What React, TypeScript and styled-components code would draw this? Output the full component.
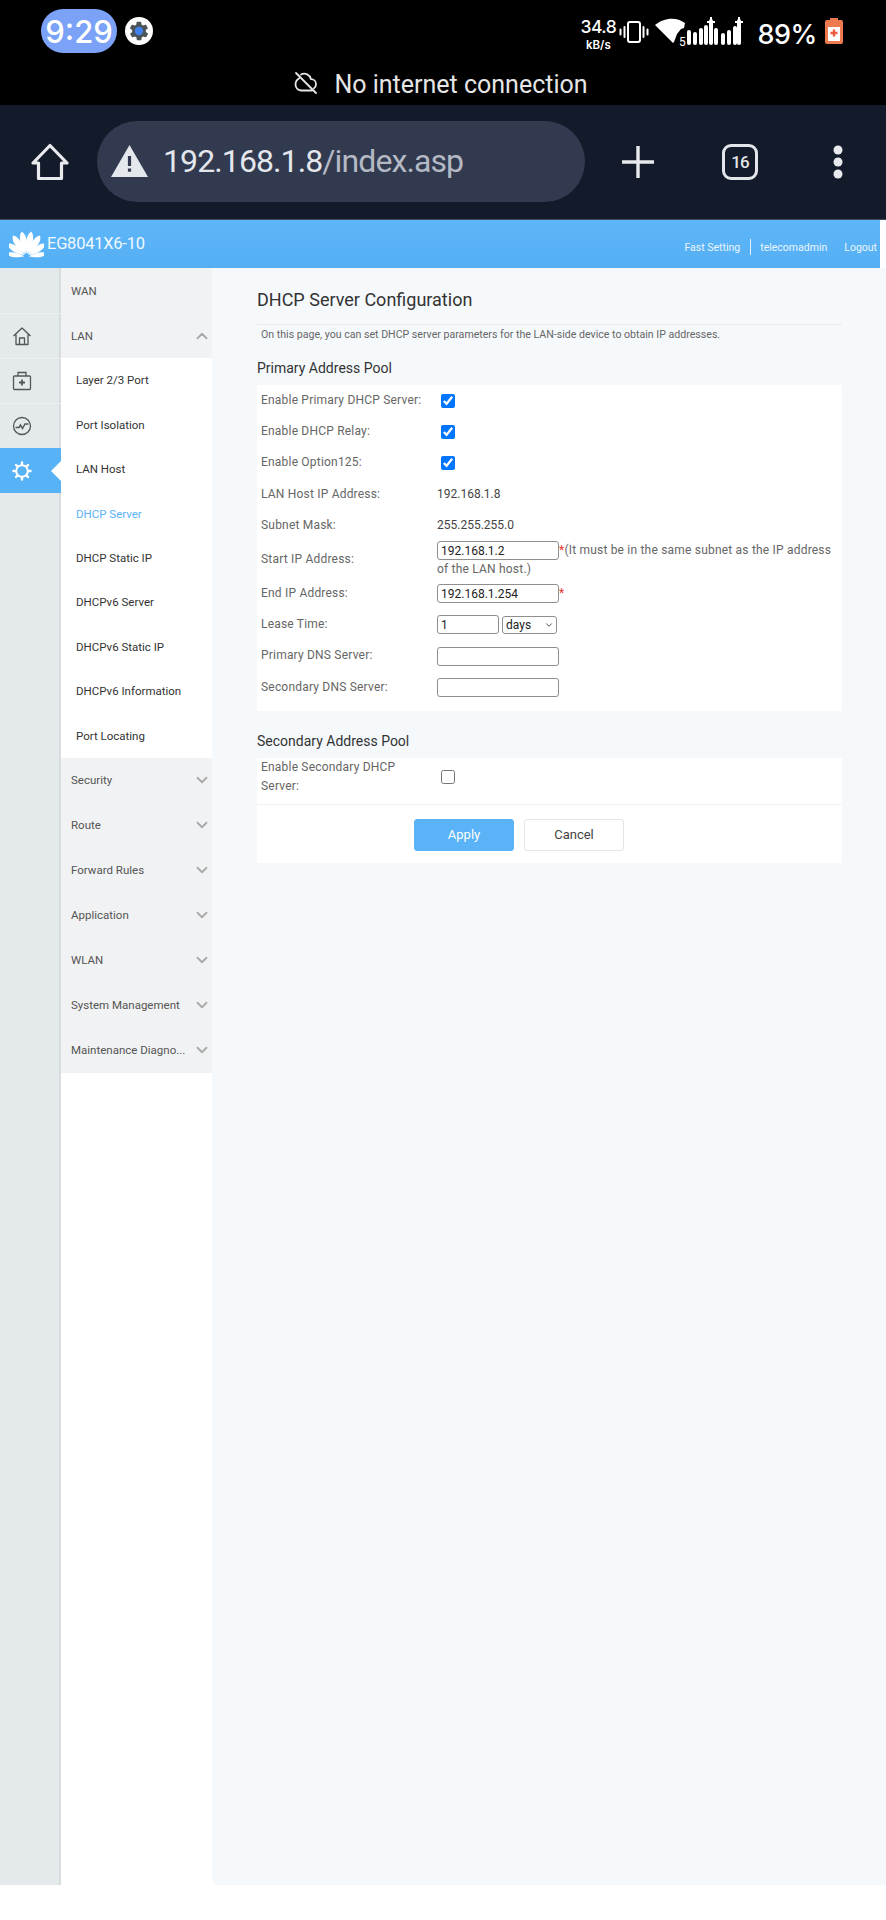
import React from "react";
import styled, { createGlobalStyle } from "styled-components";
import { ChevronDown, ChevronUp } from "lucide-react";

const Global = createGlobalStyle`
  html, body { margin: 0; padding: 0; background: #fff; }
  * { box-sizing: border-box; }
  body { font-family: Roboto, "Liberation Sans", sans-serif; }
`;

const Page = styled.div`
  width: 886px;
  height: 1920px;
  display: flex;
  flex-direction: column;
  background: #fff;
  overflow: hidden;
`;

const Phone = styled.div`
  height: 105px;
  background: #000;
  color: #fff;
  display: flex;
  flex-direction: column;
`;

const StatusRow = styled.div`
  height: 71px;
  padding: 9px 43px 0 41px;
  display: flex;
  align-items: flex-start;
`;

const TimePill = styled.div`
  width: 76px;
  height: 44px;
  border-radius: 22px;
  background: #7ba2f7;
  display: flex;
  align-items: center;
  justify-content: center;
  font: 500 31px/1 Inter, Roboto, sans-serif;
  color: #fff;
`;

const GearBadge = styled.div`
  width: 28px;
  height: 28px;
  margin: 8px 0 0 8px;
  border-radius: 50%;
  background: #fff;
  display: flex;
  align-items: center;
  justify-content: center;
`;

const StatusRight = styled.div`
  margin-left: auto;
  display: flex;
  align-items: flex-start;
`;

const Speed = styled.div`
  width: 42px;
  flex: none;
  margin-top: 8px;
  display: flex;
  flex-direction: column;
  align-items: center;
  font-family: Inter, Roboto, sans-serif;
  font-weight: 500;
  white-space: nowrap;
`;

const SpeedValue = styled.span`
  font-size: 17.5px;
  line-height: 20px;
  letter-spacing: -0.5px;
`;

const SpeedUnit = styled.span`
  font-size: 11.5px;
  line-height: 14px;
  font-weight: 600;
  margin-top: 1px;
`;

const Vibrate = styled.svg`
  width: 30px;
  height: 22px;
  margin: 12px 0 0 0;
  flex: none;
`;

const Signal = styled.svg`
  width: 95px;
  height: 30px;
  margin: 8px 0 0 5px;
  flex: none;
`;

const Battery = styled.div`
  margin-left: 8px;
  font: 500 27px/1 Inter, Roboto, sans-serif;
  letter-spacing: -0.4px;
  padding-top: 12px;
`;

const BatteryIcon = styled.svg`
  width: 18px;
  height: 26px;
  margin: 9px 0 0 8px;
  flex: none;
`;

const NoNet = styled.div`
  height: 34px;
  display: flex;
  align-items: flex-start;
  justify-content: center;
  gap: 16px;
  padding-right: 4px;
  font-size: 25px;
  line-height: 28px;
  color: #e6e6e6;
`;

const Toolbar = styled.div`
  height: 115px;
  background: #131a29;
  display: flex;
  align-items: center;
  padding-left: 31px;
  border-bottom: 1px solid #3a4a5c;
`;

const HomeIcon = styled.svg`
  width: 38px;
  height: 38px;
  margin-top: -1px;
`;

const UrlPill = styled.div`
  width: 488px;
  height: 81px;
  margin: -2px 0 0 28px;
  border-radius: 41px;
  background: #323a50;
  display: flex;
  align-items: center;
  padding-left: 14px;
`;

const UrlHost = styled.span`
  font-size: 32px;
  color: #e4e7ec;
  margin-left: 15px;
  letter-spacing: -0.9px;
`;

const UrlPath = styled.span`
  font-size: 32px;
  color: #b4b9c4;
  letter-spacing: -0.9px;
`;

const ToolIcon = styled.svg<{ $gap: number }>`
  margin-left: ${(p) => p.$gap}px;
  flex: none;
`;

const TabCount = styled.div`
  position: relative;
  width: 36px;
  height: 36px;
  margin-left: 67px;
  border: 3.5px solid #e3e5e9;
  border-radius: 9px;
  display: flex;
  align-items: center;
  justify-content: center;
  font: 500 17px/1 Roboto, sans-serif;
  letter-spacing: -0.8px;
  color: #e3e5e9;
`;

const Header = styled.header`
  width: 880px;
  height: 48px;
  background: linear-gradient(#5cb6f8, #55aff3);
  color: #fff;
  display: flex;
  align-items: center;
  padding: 0 3px 0 9px;
`;

const Brand = styled.span`
  font-size: 16.5px;
  margin: -1px 0 0 3px;
  color: #f1f8fe;
  letter-spacing: -0.25px;
`;

const HeaderLinks = styled.div`
  margin-left: auto;
  display: flex;
  align-items: center;
  font-size: 10.5px;
  padding-top: 6px;
  color: #eaf5fe;
`;

const HeaderLink = styled.span<{ $gap?: number }>`
  margin-left: ${(p) => p.$gap ?? 0}px;
`;

const HeaderDivider = styled.span`
  width: 1px;
  height: 16px;
  margin: 0 9px 0 10px;
  background: #e3f2fe;
`;

const Body = styled.div`
  height: 1617px;
  display: flex;
`;

const Rail = styled.aside`
  width: 61px;
  flex: none;
  background: #e4eaec;
  box-shadow: inset -2px 0 1px #d8dcdd;
  padding-top: 45px;
`;

const RailItem = styled.div<{ $active?: boolean }>`
  position: relative;
  height: 45px;
  display: flex;
  align-items: center;
  justify-content: center;
  padding-right: 17px;
  border-top: 1px solid ${(p) => (p.$active ? "#5ab3f6" : "#eceff1")};
  background: ${(p) => (p.$active ? "#58b2f6" : "transparent")};
  color: ${(p) => (p.$active ? "#fff" : "#555")};
  ${(p) =>
    p.$active
      ? `&::after {
    content: "";
    position: absolute;
    right: 0;
    top: 12px;
    border-style: solid;
    border-width: 10px 10px 10px 0;
    border-color: transparent #fff transparent transparent;
  }`
      : ""}
`;

const Nav = styled.nav`
  width: 151px;
  flex: none;
  background: #fff;
  font-size: 11.5px;
`;

const NavGroup = styled.div`
  height: 45px;
  background: #f1f2f3;
  color: #555;
  display: flex;
  align-items: center;
  justify-content: space-between;
  padding: 0 1px 0 10px;
  white-space: nowrap;
`;

const GroupChevron = styled.span`
  display: flex;
  color: #aaa;
`;

const NavSub = styled.div<{ $active?: boolean }>`
  height: 44.44px;
  display: flex;
  align-items: center;
  padding-left: 15px;
  color: ${(p) => (p.$active ? "#5ab3f6" : "#333")};
`;

const Main = styled.main`
  flex: 1;
  background: #f5f9fc;
  border-bottom-left-radius: 6px;
  padding: 0 44px 0 45px;
`;

const Title = styled.h1`
  margin: 0;
  padding: 20px 0 12px;
  font-size: 18px;
  line-height: 24px;
  font-weight: 400;
  color: #333;
  border-bottom: 1px solid #e8ecef;
`;

const Intro = styled.p`
  margin: 0;
  height: 20px;
  padding-left: 4px;
  font-size: 10.6px;
  line-height: 20px;
  color: #666;
`;

const SectionTitle = styled.h2<{ $top: number }>`
  margin: ${(p) => p.$top}px 0 7px;
  font-size: 14px;
  line-height: 20px;
  font-weight: 400;
  color: #333;
`;

const Panel = styled.section<{ $pad?: number }>`
  background: #fff;
  padding-bottom: ${(p) => p.$pad ?? 0}px;
`;

const Row = styled.div<{ $h?: number; $line?: boolean; $lift?: number }>`
  height: ${(p) => p.$h ?? 31.2}px;
  display: grid;
  grid-template-columns: 176px 1fr;
  align-items: center;
  padding-left: 4px;
  padding-bottom: ${(p) => p.$lift ?? 0}px;
  font-size: 12px;
  ${(p) => (p.$line ? "border-bottom: 1px solid #f0f2f4;" : "")}
`;

const Label = styled.label`
  color: #666;
  line-height: 19px;
  letter-spacing: 0.2px;
`;

const Value = styled.span`
  color: #444;
`;

const Check = styled.input.attrs({ type: "checkbox" })`
  width: 14px;
  height: 14px;
  margin: 0 0 0 4px;
  display: block;
`;

const Field = styled.input.attrs({ type: "text" })<{ $w?: number }>`
  width: ${(p) => p.$w ?? 122}px;
  height: 19px;
  padding: 0 3px;
  border: 1px solid #8f8f8f;
  border-radius: 3px;
  background: #fff;
  font: 12px Roboto, sans-serif;
  color: #222;
  vertical-align: middle;
`;

const PickerWrap = styled.span`
  position: relative;
  display: inline-block;
  margin-left: 3px;
  vertical-align: middle;
  line-height: 0;
`;

const Picker = styled.select`
  appearance: none;
  width: 55px;
  height: 18px;
  padding: 0 0 0 3px;
  border: 1px solid #8f8f8f;
  border-radius: 3px;
  background: #fff;
  font: 12px Roboto, sans-serif;
  color: #222;
`;

const PickerArrow = styled.span`
  position: absolute;
  right: 3px;
  top: 4px;
  display: flex;
  color: #333;
  pointer-events: none;
`;

const Note = styled.div`
  color: #666;
  line-height: 18.5px;
  letter-spacing: 0.2px;
  padding-right: 6px;
`;

const Required = styled.span`
  color: #e33;
`;

const Actions = styled.div`
  height: 58px;
  display: flex;
  align-items: center;
  gap: 10px;
  padding: 2px 0 0 157px;
`;

const Btn = styled.button<{ $primary?: boolean }>`
  width: 100px;
  height: 32px;
  border-radius: 3px;
  border: 1px solid ${(p) => (p.$primary ? "#5ab3f6" : "#e3e5e7")};
  background: ${(p) => (p.$primary ? "#5ab3f6" : "#fff")};
  color: ${(p) => (p.$primary ? "#fff" : "#444")};
  font: 13px Roboto, sans-serif;
`;

const Petals = () => {
  const petals = [
    [-11, 25.5, 5.4], [11, 25.5, 5.4], [-33, 25, 5.4], [33, 25, 5.4],
    [-56, 23, 5], [56, 23, 5], [-82, 20, 3.8], [82, 20, 3.8],
  ];
  const cx = 17.5;
  const cy = 26.5;
  return (
    <svg width="35" height="28" viewBox="0 0 35 28" fill="#fff">
      {petals.map(([a, l, w]) => (
        <path
          key={a}
          transform={`rotate(${a} ${cx} ${cy})`}
          d={`M${cx} ${cy - 2.5} C${cx - w * 0.5} ${cy - l * 0.35} ${cx - w * 1.05} ${cy - l * 0.8} ${cx} ${cy - l} C${cx + w * 1.05} ${cy - l * 0.8} ${cx + w * 0.5} ${cy - l * 0.35} ${cx} ${cy - 2.5}Z`}
        />
      ))}
    </svg>
  );
};

const signalBars: [number, number][] = [
  [35, 13], [41, 15], [47, 11], [52, 8], [57, 2], [62, 11], [69, 16], [75, 13], [81, 9], [85, 2],
];

const groupsAfter = ["Security", "Route", "Forward Rules", "Application", "WLAN", "System Management", "Maintenance Diagno..."];
const subs = ["Layer 2/3 Port", "Port Isolation", "LAN Host", "DHCP Server", "DHCP Static IP", "DHCPv6 Server", "DHCPv6 Static IP", "DHCPv6 Information", "Port Locating"];

export default function App() {
  return (
    <Page>
      <Global />
      <Phone>
        <StatusRow>
          <TimePill>9:29</TimePill>
          <GearBadge>
            <svg width="22" height="22" viewBox="0 0 24 24">
              <path fill="#4a5358" d="M19.4 13c.1-.3.1-.7.1-1s0-.7-.1-1l2.1-1.6c.2-.2.2-.4.1-.6l-2-3.5c-.1-.2-.4-.3-.6-.2l-2.5 1c-.5-.4-1.1-.7-1.7-1l-.4-2.6c0-.3-.2-.5-.5-.5h-4c-.3 0-.5.2-.5.5l-.4 2.6c-.6.3-1.2.6-1.7 1l-2.5-1c-.2-.1-.5 0-.6.2l-2 3.5c-.1.2-.1.4.1.6L4.6 11c-.1.3-.1.7-.1 1s0 .7.1 1l-2.1 1.6c-.2.2-.2.4-.1.6l2 3.5c.1.2.4.3.6.2l2.5-1c.5.4 1.1.7 1.7 1l.4 2.6c0 .3.2.5.5.5h4c.3 0 .5-.2.5-.5l.4-2.6c.6-.3 1.2-.6 1.7-1l2.5 1c.2.1.5 0 .6-.2l2-3.5c.1-.2.1-.4-.1-.6L19.4 13z" />
              <circle cx="12" cy="12" r="4.6" fill="#3f82ee" />
            </svg>
          </GearBadge>
          <StatusRight>
            <Speed>
              <SpeedValue>34.8</SpeedValue>
              <SpeedUnit>kB/s</SpeedUnit>
            </Speed>
            <Vibrate viewBox="0 0 30 22" fill="none" stroke="#fff" strokeWidth="2" strokeLinecap="round">
              <rect x="9" y="1" width="12" height="20" rx="2" />
              <path d="M5.5 6v10M1.5 8.5v5M24.5 6v10M28.5 8.5v5" />
            </Vibrate>
            <Signal viewBox="0 0 95 30">
              <path fill="#fff" d="M1 8C9 1 22-1 31 6l-1 5-3 1-4 5-3 8-1 1L1 8z" />
              <text x="25" y="29" fontSize="12" fontFamily="Roboto" fill="#fff">5</text>
              {signalBars.map(([x, t]) => (
                <rect key={x} x={x - 2} y={t} width="4" height={28 - t} rx="2" fill="#fff" />
              ))}
              <path stroke="#fff" strokeWidth="2" d="M53 5h8M57 0v6M81 5h8M85 0v6" />
            </Signal>
            <Battery>89%</Battery>
            <BatteryIcon viewBox="0 0 18 26">
              <path fill="#ee7a4f" d="M5 0h8v2h3a2 2 0 0 1 2 2v20a2 2 0 0 1-2 2H2a2 2 0 0 1-2-2V4a2 2 0 0 1 2-2h3z" />
              <rect x="3" y="9" width="12" height="14" fill="#fff" />
              <path stroke="#ee5a3f" strokeWidth="2.4" d="M9 11.500v7M5.500 15h7" />
            </BatteryIcon>
          </StatusRight>
        </StatusRow>
        <NoNet>
          <svg width="24" height="24" viewBox="0 0 24 24" fill="none" stroke="#e6e6e6" strokeWidth="1.8" strokeLinecap="round" strokeLinejoin="round">
            <path d="M2 2l20 20M7 3.500A7 7 0 0 1 17 8.200a5 5 0 0 1 5 5c0 1.700-.8 3.200-2 4.100M5 7.500C2.800 8.800 1.500 11 1.500 13.500 1.500 17 4.300 19.500 7.500 19.500H18" />
          </svg>
          No internet connection
        </NoNet>
      </Phone>
      <Toolbar>
        <HomeIcon viewBox="0 0 38 38" fill="none" stroke="#e8eaed" strokeWidth="3.2" strokeLinejoin="round">
          <path d="M19 2.500 36 20h-5.500v15.500h-23V20H2z" />
        </HomeIcon>
        <UrlPill>
          <svg width="37" height="32" viewBox="0 0 37 32">
            <path fill="#e4e7ec" d="M18.500 0 37 32H0z" />
            <rect x="16.900" y="11" width="3.200" height="10" fill="#323a50" />
            <rect x="16.900" y="23.500" width="3.200" height="3.200" fill="#323a50" />
          </svg>
          <UrlHost>192.168.1.8</UrlHost>
          <UrlPath>/index.asp</UrlPath>
        </UrlPill>
        <ToolIcon $gap={36} width="34" height="34" viewBox="0 0 34 34" stroke="#e8eaed" strokeWidth="3.4">
          <path d="M17 1v32M1 17h32" />
        </ToolIcon>
        <TabCount>16</TabCount>
        <ToolIcon $gap={75} width="10" height="34" viewBox="0 0 10 34" fill="#e8eaed">
          <circle cx="5" cy="5" r="4.500" />
          <circle cx="5" cy="17" r="4.500" />
          <circle cx="5" cy="29" r="4.500" />
        </ToolIcon>
      </Toolbar>
      <Header>
        <Petals />
        <Brand>EG8041X6-10</Brand>
        <HeaderLinks>
          <HeaderLink>Fast Setting</HeaderLink>
          <HeaderDivider />
          <HeaderLink>telecomadmin</HeaderLink>
          <HeaderLink $gap={17}>Logout</HeaderLink>
        </HeaderLinks>
      </Header>
      <Body>
        <Rail>
          <RailItem>
            <svg width="20" height="20" viewBox="0 0 20 20" fill="none" stroke="currentColor" strokeWidth="1.3" strokeLinejoin="round">
              <path d="M1.500 10 10 2l8.500 8M4 8.500V18.500h12V8.500M7.500 18.500v-6.500h5v6.500" />
            </svg>
          </RailItem>
          <RailItem>
            <svg width="20" height="20" viewBox="0 0 20 20" fill="none" stroke="currentColor" strokeWidth="1.3">
              <rect x="1.500" y="5" width="17" height="13.500" rx="1" />
              <path d="M6 5V1.500h8V5" />
              <path strokeWidth="1.8" d="M10 8.500v6M7 11.500h6" />
            </svg>
          </RailItem>
          <RailItem>
            <svg width="20" height="20" viewBox="0 0 20 20" fill="none" stroke="currentColor" strokeWidth="1.3">
              <circle cx="10" cy="10" r="8.500" />
              <path strokeWidth="1.500" d="M3.500 11.500H7l1.500-2.500 2 3.500L13 8h3.500" />
            </svg>
          </RailItem>
          <RailItem $active>
            <svg width="20" height="20" viewBox="0 0 20 20" fill="none" stroke="currentColor" strokeWidth="2">
              <circle cx="10" cy="10" r="5.800" />
              <path strokeWidth="2.400" strokeLinecap="round" d="M10 1.500v2M10 16.500v2M1.500 10h2M16.500 10h2M4 4l1.400 1.400M14.600 14.600 16 16M4 16l1.400-1.400M14.600 5.400 16 4" />
            </svg>
          </RailItem>
        </Rail>
        <Nav>
          <NavGroup>WAN</NavGroup>
          <NavGroup>
            LAN
            <GroupChevron><ChevronUp size={18} strokeWidth={2.5} /></GroupChevron>
          </NavGroup>
          {subs.map((s) => (
            <NavSub key={s} $active={s === "DHCP Server"}>{s}</NavSub>
          ))}
          {groupsAfter.map((g) => (
            <NavGroup key={g}>
              {g}
              <GroupChevron><ChevronDown size={18} strokeWidth={2.5} /></GroupChevron>
            </NavGroup>
          ))}
        </Nav>
        <Main>
          <Title>DHCP Server Configuration</Title>
          <Intro>On this page, you can set DHCP server parameters for the LAN-side device to obtain IP addresses.</Intro>
          <SectionTitle $top={13}>Primary Address Pool</SectionTitle>
          <Panel $pad={8}>
            <Row><Label>Enable Primary DHCP Server:</Label><Check defaultChecked /></Row>
            <Row><Label>Enable DHCP Relay:</Label><Check defaultChecked /></Row>
            <Row><Label>Enable Option125:</Label><Check defaultChecked /></Row>
            <Row><Label>LAN Host IP Address:</Label><Value>192.168.1.8</Value></Row>
            <Row><Label>Subnet Mask:</Label><Value>255.255.255.0</Value></Row>
            <Row $h={37}>
              <Label>Start IP Address:</Label>
              <Note>
                <Field defaultValue="192.168.1.2" /><Required>*</Required>(It must be in the same subnet as the IP address of the LAN host.)
              </Note>
            </Row>
            <Row><Label>End IP Address:</Label><Note><Field defaultValue="192.168.1.254" /><Required>*</Required></Note></Row>
            <Row>
              <Label>Lease Time:</Label>
              <Note>
                <Field $w={62} defaultValue="1" />
                <PickerWrap>
                  <Picker defaultValue="days"><option>days</option><option>hours</option></Picker>
                  <PickerArrow><ChevronDown size={10} strokeWidth={2} /></PickerArrow>
                </PickerWrap>
              </Note>
            </Row>
            <Row><Label>Primary DNS Server:</Label><Note><Field /></Note></Row>
            <Row><Label>Secondary DNS Server:</Label><Note><Field /></Note></Row>
          </Panel>
          <SectionTitle $top={20}>Secondary Address Pool</SectionTitle>
          <Panel>
            <Row $h={47} $line $lift={9}>
              <Label>Enable Secondary DHCP<br />Server:</Label>
              <Check />
            </Row>
            <Actions>
              <Btn $primary>Apply</Btn>
              <Btn>Cancel</Btn>
            </Actions>
          </Panel>
        </Main>
      </Body>
    </Page>
  );
}
